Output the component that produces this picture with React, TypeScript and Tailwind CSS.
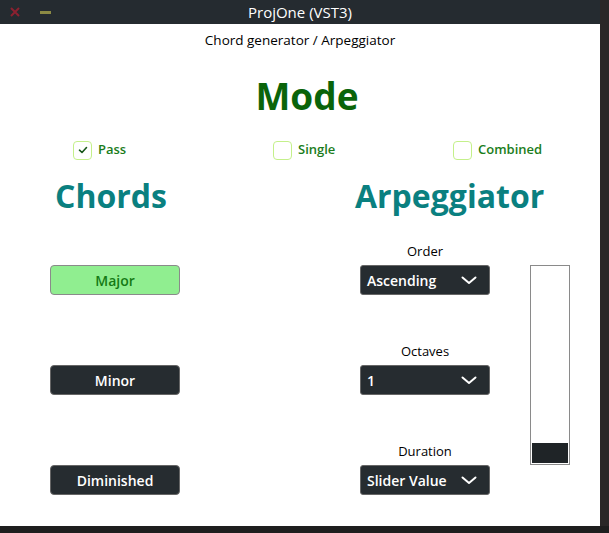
import React from 'react';

const font = "font-['Open_Sans','Noto_Sans',sans-serif]";

function Check({ label, checked }: { label: string; checked?: boolean }) {
  return (
    <div className="flex items-center gap-[6px]">
      <div className="flex h-[19px] w-[19px] items-center justify-center rounded-[4px] border-[1.5px] border-[#c4f08a] bg-white">
        {checked && (
          <svg width="10" height="10" viewBox="0 0 10 10">
            <path d="M1.5 5.2 L4 7.5 L8.5 2.5" fill="none" stroke="#17561a" strokeWidth="1.6" strokeLinecap="round" strokeLinejoin="round" />
          </svg>
        )}
      </div>
      <span className="text-[13px] font-semibold text-[#1b7d1b]">{label}</span>
    </div>
  );
}

function ChordButton({ label, active }: { label: string; active?: boolean }) {
  return (
    <div
      className={
        active
          ? 'flex h-[30px] w-[130px] items-center justify-center rounded-[4px] border border-[#8a8a8a] bg-[#90ee90] text-[14px] font-semibold text-[#157a15]'
          : 'flex h-[30px] w-[130px] items-center justify-center rounded-[4px] border border-[#666] bg-[#262c30] text-[14px] font-semibold text-white'
      }
    >
      {label}
    </div>
  );
}

function Combo({ label, value }: { label: string; value: string }) {
  return (
    <div className="flex flex-col">
      <div className="flex h-[30px] items-center justify-center pt-[3px] text-[13px] text-black">{label}</div>
      <div className="flex h-[30px] w-[130px] items-center justify-between rounded-[3px] border border-[#666] bg-[#262c30] pl-[6px] pr-[12px] text-[14px] font-semibold text-white">
        <span>{value}</span>
        <svg width="16" height="9" viewBox="0 0 16 9">
          <path d="M1.5 1.5 L8 7 L14.5 1.5" fill="none" stroke="white" strokeWidth="2" strokeLinecap="round" strokeLinejoin="round" />
        </svg>
      </div>
    </div>
  );
}

export default function App() {
  return (
    <div className={`flex h-[533px] w-[609px] flex-col bg-[#1e1e1e] ${font}`}>
      <div className="flex h-[526px]">
        <div className="flex w-[600px] flex-col">
          {/* Title bar */}
          <div className="relative flex h-[24px] items-center justify-center bg-[#252b30]">
            <div className="absolute left-[10px] top-[7px] flex items-center gap-[20px]">
              <svg width="10" height="10" viewBox="0 0 10 10">
                <path d="M1 1 L9 9 M9 1 L1 9" stroke="#8b2130" strokeWidth="2" />
              </svg>
              <div className="h-[3px] w-[11px] bg-[#8c8a44]" />
            </div>
            <span className="text-[15px] font-medium text-white">ProjOne (VST3)</span>
          </div>

          {/* Content */}
          <div className="flex flex-1 flex-col bg-white">
            <div className="flex h-[32px] items-center justify-center text-[13.5px] text-black">
              Chord generator / Arpeggiator
            </div>
            <div className="flex h-[78px] items-center justify-center pl-[14px] pt-[2px] text-[37px] font-bold text-[#0a640a]">
              Mode
            </div>
            <div className="flex h-[32px] items-center pl-[73px]">
              <div className="w-[200px]">
                <Check label="Pass" checked />
              </div>
              <div className="w-[180px]">
                <Check label="Single" />
              </div>
              <Check label="Combined" />
            </div>

            <div className="mt-[14px] flex">
              {/* Chords column */}
              <div className="flex w-[300px] flex-col">
                <div className="flex h-[32px] items-center pl-[55px] text-[32px] font-bold text-[#0a8080]">Chords</div>
                <div className="ml-[50px] mt-[53px] flex flex-col gap-[70px]">
                  <ChordButton label="Major" active />
                  <ChordButton label="Minor" />
                  <ChordButton label="Diminished" />
                </div>
              </div>

              {/* Arpeggiator column */}
              <div className="flex w-[300px] flex-col">
                <div className="flex h-[32px] items-center pl-[55px] text-[32px] font-bold text-[#0a8080]">Arpeggiator</div>
                <div className="flex">
                  <div className="ml-[60px] mt-[23px] flex flex-col gap-[40px]">
                    <Combo label="Order" value="Ascending" />
                    <Combo label="Octaves" value="1" />
                    <Combo label="Duration" value="Slider Value" />
                  </div>
                  <div className="ml-[40px] mt-[53px] flex h-[200px] w-[40px] flex-col justify-end border border-[#8a8a8a] bg-white p-[1px]">
                    <div className="h-[20px] bg-[#1f2427]" />
                  </div>
                </div>
              </div>
            </div>
          </div>
        </div>
        <div className="w-[9px] bg-[#2a2727]" />
      </div>
      <div className="h-[7px] bg-[#1e1e1e]" />
    </div>
  );
}
